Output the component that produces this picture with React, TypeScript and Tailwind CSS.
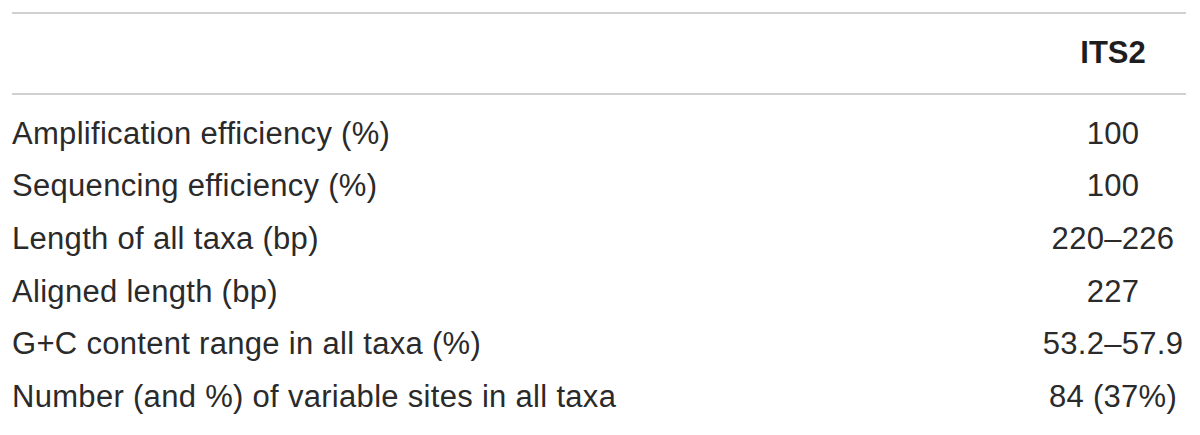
import React from 'react';

const rows: [string, string][] = [
    ['Amplification efficiency (%)', '100'],
    ['Sequencing efficiency (%)', '100'],
    ['Length of all taxa (bp)', '220–226'],
    ['Aligned length (bp)', '227'],
    ['G+C content range in all taxa (%)', '53.2–57.9'],
    ['Number (and %) of variable sites in all taxa', '84 (37%)'],
];

const App: React.FC = () => {
    return (
        <div className="w-[1200px] h-[435px] bg-white pt-[12px] pl-[12px] font-['Liberation_Sans',Arial,sans-serif] text-[#2b2a2a]">
            <table className="w-[1174px] border-collapse">
                <thead>
                    <tr className="border-t-[2px] border-b-[2px] border-[#d0d0d0]">
                        <th className="h-[81px] p-0"></th>
                        <th className="w-[146px] p-0 text-center text-[31px] font-bold text-[#1e1e1e]">ITS2</th>
                    </tr>
                </thead>
                <tbody>
                    <tr>
                        <td className="h-[13px] p-0" colSpan={2}></td>
                    </tr>
                    {rows.map(([label, value]) => (
                        <tr key={label}>
                            <td className="h-[52.6px] p-0 text-[31px] leading-none tracking-[0.3px]">{label}</td>
                            <td className="p-0 text-center text-[31px] leading-none tracking-[0.3px]">{value}</td>
                        </tr>
                    ))}
                </tbody>
            </table>
        </div>
    );
};

export default App;
